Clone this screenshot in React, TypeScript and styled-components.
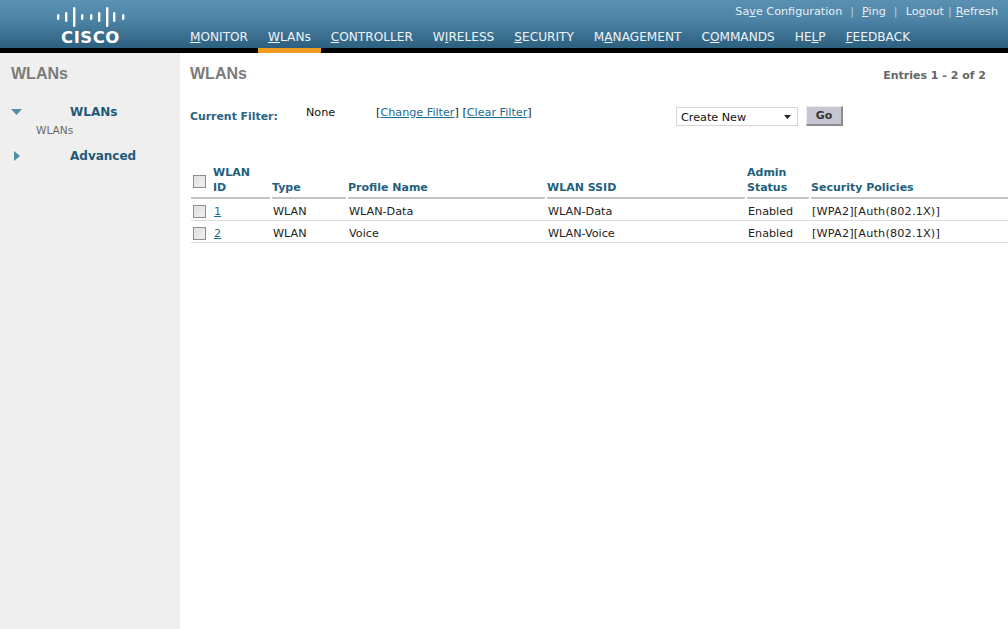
import React from "react";
import styled, { createGlobalStyle } from "styled-components";

const GlobalStyle = createGlobalStyle`
  html, body {
    margin: 0;
    padding: 0;
    background: #fff;
    font-family: "DejaVu Sans", Tahoma, sans-serif;
  }
`;

const Page = styled.div`
  width: 1008px;
  height: 629px;
  display: flex;
  flex-direction: column;
  overflow: hidden;
`;

const Header = styled.header`
  height: 48px;
  flex: none;
  display: flex;
  background: linear-gradient(#5a90b2, #4e84a6 40%, #2d607f);
  border-bottom: 5px solid #000;
  position: relative;
`;

const LogoArea = styled.div`
  width: 190px;
  flex: none;
  display: flex;
  flex-direction: column;
  align-items: center;
  padding: 7px 9px 0 0;
  box-sizing: border-box;
  color: #fff;
`;

const LogoText = styled.span`
  font: bold 16.5px/16px "DejaVu Sans", sans-serif;
  letter-spacing: 0.5px;
  margin-top: 3px;
`;

const HeaderMain = styled.div`
  flex: 1;
  display: flex;
  flex-direction: column;
  justify-content: space-between;
`;

const TopLinks = styled.div`
  display: flex;
  justify-content: flex-end;
  align-items: center;
  padding: 5px 10px 0 0;
  font-size: 11.2px;
  line-height: 13px;
  color: #e6eef3;
`;

const Sep = styled.span<{ $gap: number }>`
  color: #b8d0de;
  margin: 0 ${(p) => p.$gap}px;
`;

const Nav = styled.nav`
  display: flex;
  height: 23px;
`;

const NavItem = styled.a<{ $active?: boolean }>`
  position: relative;
  padding: 4px 10px 0;
  font-size: 12.14px;
  line-height: 16px;
  color: #eef4f7;
  white-space: nowrap;
  &:first-child {
    padding-left: 0;
  }
  ${(p) =>
    p.$active &&
    `
    &::after {
      content: "";
      position: absolute;
      left: 0;
      right: 0;
      top: 23px;
      height: 5px;
      background: #f09c22;
    }
  `}
`;

const Body = styled.div`
  flex: 1;
  display: flex;
  min-height: 0;
`;

const Sidebar = styled.aside`
  width: 180px;
  flex: none;
  background: #efefef;
  padding: 12px 0 0 11px;
  box-sizing: border-box;
`;

const PageTitle = styled.h1`
  margin: 0;
  font: bold 16px/18px "Liberation Sans", Arial, sans-serif;
  color: #7b7b7b;
`;

const SideGroup = styled.div<{ $top: number }>`
  display: flex;
  align-items: center;
  margin-top: ${(p) => p.$top}px;
  height: 16px;
`;

const Arrow = styled.svg`
  width: 12px;
  height: 10px;
  flex: none;
  fill: #4f8f9f;
`;

const SideLabel = styled.span`
  margin-left: 47px;
  font-size: 12px;
  font-weight: bold;
  color: #1f5a7a;
`;

const SideSub = styled.div`
  margin: 4px 0 0 25px;
  font-size: 10.6px;
  line-height: 13px;
  color: #6a6a6a;
`;

const Content = styled.main`
  flex: 1;
  padding: 12px 0 0 10px;
  min-width: 0;
`;

const TitleRow = styled.div`
  display: flex;
  justify-content: space-between;
  align-items: center;
  padding-right: 22px;
`;

const Entries = styled.span`
  font-size: 11px;
  font-weight: bold;
  color: #666;
  margin-top: 2px;
`;

const FilterRow = styled.div`
  display: flex;
  align-items: flex-start;
  margin-top: 23px;
  height: 21px;
`;

const FilterLabel = styled.span`
  width: 116px;
  flex: none;
  padding-top: 4px;
  font-size: 10.9px;
  font-weight: bold;
  color: #2a6480;
`;

const FilterValue = styled.span`
  width: 70px;
  flex: none;
  font-size: 11.2px;
  line-height: 14px;
  color: #111;
`;

const FilterLinks = styled.span`
  width: 300px;
  flex: none;
  font-size: 11.2px;
  line-height: 14px;
  color: #222;
`;

const Link = styled.a`
  color: #1d6a94;
  text-decoration: underline;
`;

const SelectBox = styled.div`
  width: 122px;
  height: 19px;
  flex: none;
  box-sizing: border-box;
  border: 1px solid #d5d5d5;
  margin-top: 1px;
  padding: 1px 4px 0;
  display: flex;
  align-items: center;
  justify-content: space-between;
  font-size: 11.2px;
  color: #111;
`;

const Caret = styled.svg`
  width: 7px;
  height: 4px;
  fill: #222;
  margin-right: 2px;
`;

const GoButton = styled.button`
  width: 37px;
  height: 20px;
  margin: 0 0 0 8px;
  padding: 0;
  background: #c6c6d2;
  border: none;
  border-right: 2px solid #8c8c8c;
  border-bottom: 2px solid #8c8c8c;
  border-top: 1px solid #ececec;
  border-left: 1px solid #ececec;
  font: bold 11px "DejaVu Sans", sans-serif;
  color: #333;
`;

const columns = "22px 59px 76px 199px 200px 64px 1fr";

const HeadRow = styled.div`
  display: grid;
  grid-template-columns: ${columns};
  margin: 38px 0 0 1px;
`;

const HeadCell = styled.div`
  display: flex;
  align-items: flex-end;
  padding: 0 0 2px 0;
  margin-right: 2px;
  font-size: 11px;
  line-height: 15px;
  font-weight: bold;
  color: #235f7e;
  border-bottom: 2px solid #c4c4c4;
  &:last-child {
    margin-right: 0;
  }
`;

const CheckHead = styled(HeadCell)`
  align-items: center;
  padding: 0 0 0 1px;
  margin-right: 0;
`;

const Row = styled.div`
  display: grid;
  grid-template-columns: ${columns};
  margin-left: 1px;
  height: 22px;
  padding-top: 3px;
  align-items: center;
  border-bottom: 1px solid #dcdcdc;
  box-sizing: border-box;
  font-size: 11.2px;
  color: #222;
`;

const Cell = styled.div`
  padding-left: 1px;
  white-space: nowrap;
`;

const PolicyCell = styled(Cell)`
  letter-spacing: 0.2px;
`;

const Check = styled.span`
  display: block;
  width: 11px;
  height: 11px;
  border: 1px solid #8e8e8e;
  background: linear-gradient(135deg, #dcdcdc, #f4f4f4);
  box-shadow: inset 0 0 0 1px #e8e8e8;
  margin-left: 1px;
`;

const rows = [
  { id: "1", name: "WLAN-Data", ssid: "WLAN-Data" },
  { id: "2", name: "Voice", ssid: "WLAN-Voice" },
];

const navItems: [string, string, string, boolean?][] = [
  ["", "M", "ONITOR"],
  ["", "W", "LANs", true],
  ["", "C", "ONTROLLER"],
  ["W", "I", "RELESS"],
  ["", "S", "ECURITY"],
  ["M", "A", "NAGEMENT"],
  ["C", "O", "MMANDS"],
  ["HE", "L", "P"],
  ["", "F", "EEDBACK"],
];

function CiscoBars() {
  const bars = [
    [1, 6], [9, 10], [17, 20], [25, 6], [34, 6], [42, 10], [50, 20], [57, 10], [66, 6],
  ];
  return (
    <svg width="68" height="20" viewBox="0 0 68 20">
      {bars.map(([x, h]) => (
        <rect key={x} x={x - 1} y={10 - h / 2} width="2.4" height={h} rx="1.2" fill="#fff" />
      ))}
    </svg>
  );
}

export default function App() {
  return (
    <Page>
      <GlobalStyle />
      <Header>
        <LogoArea>
          <CiscoBars />
          <LogoText>CISCO</LogoText>
        </LogoArea>
        <HeaderMain>
          <TopLinks>
            <span>Sa<u>v</u>e Configuration</span>
            <Sep $gap={8}>|</Sep>
            <span><u>P</u>ing</span>
            <Sep $gap={8}>|</Sep>
            <span>Lo<u>g</u>out</span>
            <Sep $gap={4}>|</Sep>
            <span><u>R</u>efresh</span>
          </TopLinks>
          <Nav>
            {navItems.map(([pre, key, post, active]) => (
              <NavItem key={pre + key + post} $active={active}>
                {pre}<u>{key}</u>{post}
              </NavItem>
            ))}
          </Nav>
        </HeaderMain>
      </Header>
      <Body>
        <Sidebar>
          <PageTitle>WLANs</PageTitle>
          <SideGroup $top={21}>
            <Arrow viewBox="0 0 12 10"><path d="M0 2h11L5.5 8z" /></Arrow>
            <SideLabel>WLANs</SideLabel>
          </SideGroup>
          <SideSub>WLANs</SideSub>
          <SideGroup $top={11}>
            <Arrow viewBox="0 0 12 10"><path d="M3 0l6 5-6 5z" /></Arrow>
            <SideLabel>Advanced</SideLabel>
          </SideGroup>
        </Sidebar>
        <Content>
          <TitleRow>
            <PageTitle>WLANs</PageTitle>
            <Entries>Entries 1 - 2 of 2</Entries>
          </TitleRow>
          <FilterRow>
            <FilterLabel>Current Filter:</FilterLabel>
            <FilterValue>None</FilterValue>
            <FilterLinks>
              [<Link>Change Filter</Link>] [<Link>Clear Filter</Link>]
            </FilterLinks>
            <SelectBox>
              Create New
              <Caret viewBox="0 0 7 4"><path d="M0 0h7L3.5 4z" /></Caret>
            </SelectBox>
            <GoButton>Go</GoButton>
          </FilterRow>
          <HeadRow>
            <CheckHead><Check /></CheckHead>
            <HeadCell>WLAN<br />ID</HeadCell>
            <HeadCell>Type</HeadCell>
            <HeadCell>Profile Name</HeadCell>
            <HeadCell>WLAN SSID</HeadCell>
            <HeadCell>Admin<br />Status</HeadCell>
            <HeadCell>Security Policies</HeadCell>
          </HeadRow>
          {rows.map((r) => (
            <Row key={r.id}>
              <Cell><Check /></Cell>
              <Cell><Link>{r.id}</Link></Cell>
              <Cell>WLAN</Cell>
              <Cell>{r.name}</Cell>
              <Cell>{r.ssid}</Cell>
              <Cell>Enabled</Cell>
              <PolicyCell>[WPA2][Auth(802.1X)]</PolicyCell>
            </Row>
          ))}
        </Content>
      </Body>
    </Page>
  );
}
